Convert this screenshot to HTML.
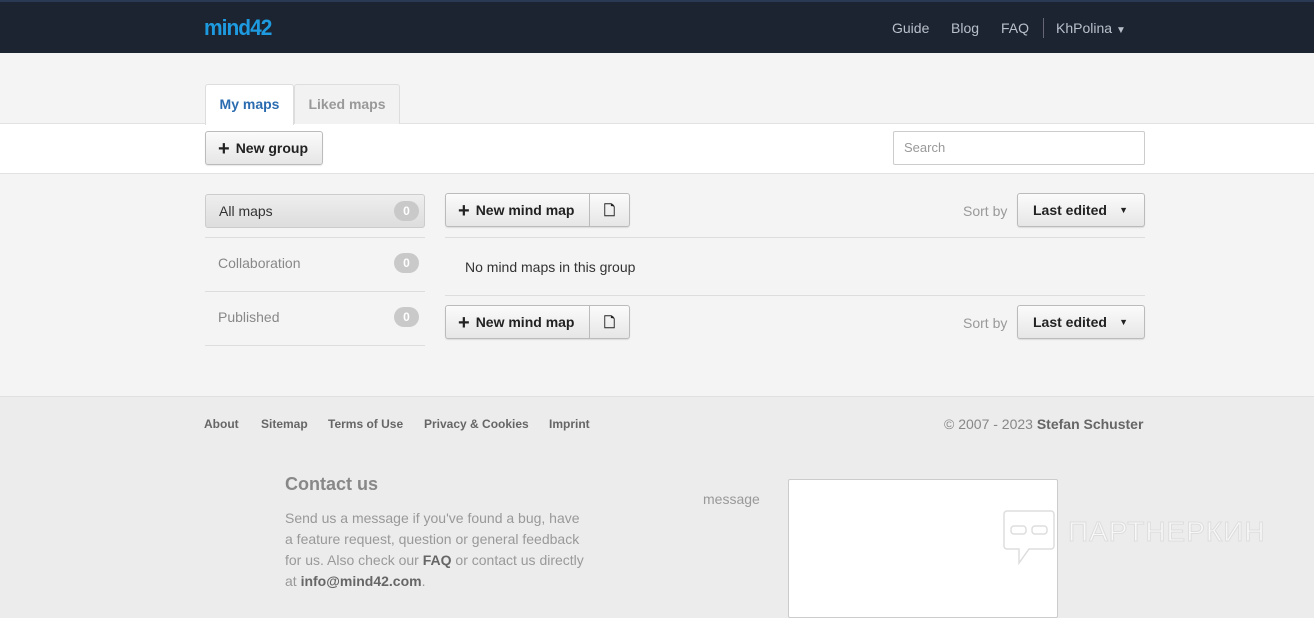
<!DOCTYPE html>
<html><head><meta charset="utf-8"><style>
*{box-sizing:border-box;margin:0;padding:0}
body{width:1314px;height:618px;overflow:hidden;font-family:"Liberation Sans",sans-serif;background:#f4f4f4;position:relative}
.top{position:absolute;left:0;top:0;width:1314px;height:53px;background:#1c2431;border-top:2px solid #2a3a55}
.logo{position:absolute;left:204px;top:15px;color:#1e9be0;font-weight:bold;font-size:22px;letter-spacing:-1px;transform:scaleX(0.95);transform-origin:left}
.nav{position:absolute;top:20px;color:#b9c0cb;font-size:14px}
.tabs{position:absolute;top:84px;height:40px;border:1px solid #ddd;border-bottom:none;font-weight:bold;font-size:14px;text-align:center;line-height:38px;border-radius:3px 3px 0 0}
.band{position:absolute;left:0;top:123px;width:1314px;height:51px;background:#fff;border-top:1px solid #e2e2e2;border-bottom:1px solid #e2e2e2}
.btn{position:absolute;height:34px;border:1px solid #bbb;border-radius:3px;background:linear-gradient(#fbfbfb,#e6e6e6);font-weight:bold;font-size:14px;color:#222;line-height:32px;box-shadow:0 1px 1px rgba(0,0,0,.1)}
.plus{font-size:20px;font-weight:bold;vertical-align:-2px;margin-right:6px}
.side{position:absolute;left:205px;width:220px;height:34px;font-size:14px;color:#888;line-height:34px;padding-left:13px}
.badge{position:absolute;right:6px;top:7px;width:25px;height:20px;border-radius:10px;background:#c9c9c9;color:#fff;font-size:12px;line-height:20px;text-align:center;font-weight:bold}
.hr{position:absolute;height:1px;background:#ddd}
.foot{position:absolute;left:0;top:396px;width:1314px;height:222px;background:#ececec;border-top:1px solid #e0e0e0}
.fl{position:absolute;top:417px;font-size:12px;font-weight:bold;color:#666}
</style></head><body>
<div class="top"></div>
<div class="logo">mind42</div>
<div class="nav" style="left:892px">Guide</div>
<div class="nav" style="left:951px">Blog</div>
<div class="nav" style="left:1001px">FAQ</div>
<div style="position:absolute;left:1043px;top:18px;width:1px;height:20px;background:#667"></div>
<div class="nav" style="left:1056px">KhPolina <span style="font-size:10px">▼</span></div>
<div class="band"></div>
<div class="tabs" style="left:205px;width:89px;background:#fff;color:#2b6cb0;height:41px">My maps</div>
<div class="tabs" style="left:294px;width:106px;background:#f2f2f2;color:#999">Liked maps</div>
<div class="btn" style="left:205px;top:131px;width:118px;padding-left:12px"><span class="plus">+</span>New group</div>
<div style="position:absolute;left:893px;top:131px;width:252px;height:34px;border:1px solid #ccc;border-radius:2px;background:#fff;font-size:13px;color:#999;padding:8px 10px">Search</div>
<div class="side" style="top:194px;background:linear-gradient(#eee,#ddd);border:1px solid #ccc;border-radius:3px;color:#333;line-height:32px">All maps<div class="badge" style="right:5px;top:6px">0</div></div>
<div class="hr" style="left:205px;top:237px;width:220px"></div>
<div class="side" style="top:246px">Collaboration<div class="badge">0</div></div>
<div class="hr" style="left:205px;top:291px;width:220px"></div>
<div class="side" style="top:300px">Published<div class="badge">0</div></div>
<div class="hr" style="left:205px;top:345px;width:220px"></div>
<div class="btn" style="left:445px;top:193px;width:185px;padding-left:12px"><span class="plus">+</span>New mind map<span style="position:absolute;left:143px;top:0;height:32px;border-left:1px solid #bbb;width:40px;text-align:center">🗋</span></div>
<div style="position:absolute;left:963px;top:203px;font-size:14px;color:#999">Sort by</div>
<div class="btn" style="left:1017px;top:193px;width:128px;padding-left:15px">Last edited<span style="position:absolute;right:16px;font-size:9px">▼</span></div>
<div class="hr" style="left:445px;top:237px;width:700px"></div>
<div style="position:absolute;left:465px;top:259px;font-size:14px;color:#333">No mind maps in this group</div>
<div class="hr" style="left:445px;top:295px;width:700px"></div>
<div class="btn" style="left:445px;top:305px;width:185px;padding-left:12px"><span class="plus">+</span>New mind map<span style="position:absolute;left:143px;top:0;height:32px;border-left:1px solid #bbb;width:40px;text-align:center">🗋</span></div>
<div style="position:absolute;left:963px;top:315px;font-size:14px;color:#999">Sort by</div>
<div class="btn" style="left:1017px;top:305px;width:128px;padding-left:15px">Last edited<span style="position:absolute;right:16px;font-size:9px">▼</span></div>
<div class="foot"></div>
<div class="fl" style="left:204px">About</div>
<div class="fl" style="left:261px">Sitemap</div>
<div class="fl" style="left:328px">Terms of Use</div>
<div class="fl" style="left:424px">Privacy &amp; Cookies</div>
<div class="fl" style="left:549px">Imprint</div>
<div style="position:absolute;left:944px;top:416px;font-size:14px;color:#888">© 2007 - 2023 <b style="color:#666">Stefan Schuster</b></div>
<div style="position:absolute;left:285px;top:474px;font-size:18px;font-weight:bold;color:#888">Contact us</div>
<div style="position:absolute;left:285px;top:508px;width:300px;font-size:14px;line-height:21px;color:#999">Send us a message if you've found a bug, have a feature request, question or general feedback for us. Also check our <b style="color:#666">FAQ</b> or contact us directly at <b style="color:#666">info@mind42.com</b>.</div>
<div style="position:absolute;left:703px;top:491px;font-size:14px;color:#999">message</div>
<div style="position:absolute;left:788px;top:479px;width:270px;height:139px;background:#fff;border:1px solid #ccc;border-radius:2px"></div>
<svg style="position:absolute;left:1003px;top:510px" width="52" height="56" viewBox="0 0 52 56" fill="none" stroke="#ddd" stroke-width="1.5"><path d="M4 1h44a3 3 0 0 1 3 3v32a3 3 0 0 1-3 3H26l-10 14V39H4a3 3 0 0 1-3-3V4a3 3 0 0 1 3-3z"/><rect x="8" y="16" width="15" height="8" rx="3"/><rect x="29" y="16" width="15" height="8" rx="3"/></svg>
<div style="position:absolute;left:1068px;top:516px;font-size:28px;color:#f8f8f8;-webkit-text-stroke:1px #ddd;letter-spacing:1px">ПАРТНЕРКИН</div>
</body></html>
